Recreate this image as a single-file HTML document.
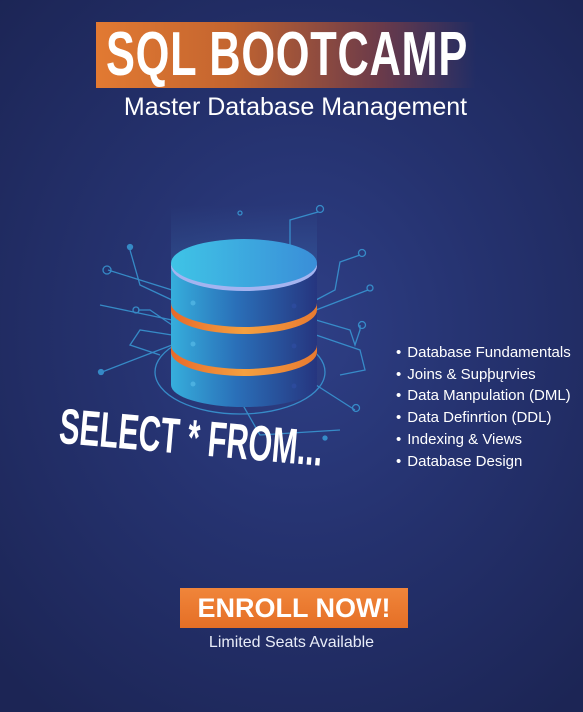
<!DOCTYPE html>
<html><head><meta charset="utf-8"><style>
html,body{margin:0;padding:0}
body{width:583px;height:712px;overflow:hidden;position:relative;font-family:"Liberation Sans",sans-serif;
background:radial-gradient(ellipse 420px 480px at 300px 330px,#2e3f86 0%,#25326f 45%,#1c2555 100%);}
.abs{position:absolute}
#banner{left:96px;top:22px;width:380px;height:66px;background:linear-gradient(90deg,#e27a32 0%,#c4652f 35%,#6a3a4a 75%,rgba(40,40,90,0) 100%)}
#title{left:106px;top:17px;color:#fff;font-weight:bold;font-size:62px;line-height:76px;transform:scaleX(0.70);transform-origin:left top;white-space:nowrap;letter-spacing:1px}
#sub{left:0;width:583px;top:91px;text-align:center;color:#fff;font-size:25px;line-height:32px;padding-left:4px}
#list{left:396px;top:342px;color:#fff;font-size:15px;line-height:21.7px}
#list div:before{content:"•";margin-right:6px}
#sel{left:62px;top:398px;color:#fff;font-weight:bold;font-size:50px;line-height:56px;transform:rotate(5deg) scaleX(0.61);transform-origin:left top;white-space:nowrap}
#btn{left:180px;top:588px;width:228px;height:40px;background:linear-gradient(#f0853a,#e56f26);color:#fff;font-weight:bold;font-size:27px;line-height:40px;text-align:center}
#lim{left:0;width:583px;top:633px;text-align:center;color:#e8ecf8;font-size:16px;line-height:20px}
</style></head><body>
<div id="banner" class="abs"></div>
<div id="title" class="abs">SQL BOOTCAMP</div>
<div id="sub" class="abs">Master Database Management</div>
<svg class="abs" style="left:0;top:0" width="583" height="712">
<defs>
<linearGradient id="cyl" x1="0" x2="1"><stop offset="0" stop-color="#36aedc"/><stop offset=".45" stop-color="#2a6fb8"/><stop offset="1" stop-color="#26357f"/></linearGradient>
<linearGradient id="top" x1="0" x2="1"><stop offset="0" stop-color="#3fc4e6"/><stop offset="1" stop-color="#3a8ed8"/></linearGradient>
<linearGradient id="band" x1="0" x2="1"><stop offset="0" stop-color="#e86a2a"/><stop offset=".5" stop-color="#f4a040"/><stop offset="1" stop-color="#e87a30"/></linearGradient>
<linearGradient id="glow" x1="0" y1="0" x2="0" y2="1"><stop offset="0" stop-color="#4aa0e0" stop-opacity="0"/><stop offset="1" stop-color="#4aa0e0" stop-opacity=".35"/></linearGradient>
</defs>
<g stroke="#3aa0dc" stroke-width="1.3" fill="none" opacity=".8">
<path d="M172 290 L108 270"/><circle cx="107" cy="270" r="4"/>
<path d="M172 300 L140 285 L130 250"/><circle cx="130" cy="247" r="2.5" fill="#3aa0dc"/>
<path d="M172 320 L100 305"/><path d="M172 325 L150 310 L138 310"/><circle cx="136" cy="310" r="3"/>
<path d="M172 345 L102 372"/><circle cx="101" cy="372" r="2.5" fill="#3aa0dc"/>
<path d="M172 335 L140 330 L130 345 L160 355"/>
<path d="M290 245 L290 220 L318 212"/><circle cx="320" cy="209" r="3.5"/>
<path d="M316 300 L335 290 L340 262 L360 255"/><circle cx="362" cy="253" r="3.5"/>
<path d="M316 310 L368 290"/><circle cx="370" cy="288" r="3"/>
<path d="M316 320 L350 330 L355 345 L360 330 L360 325"/><circle cx="362" cy="325" r="3.5"/>
<path d="M316 335 L360 350 L365 370 L340 375"/>
<path d="M316 385 L355 410"/><circle cx="356" cy="408" r="3.5"/>
<ellipse cx="240" cy="372" rx="85" ry="42"/>
<path d="M240 400 L260 435 L340 430"/>
<circle cx="240" cy="213" r="2"/>
<circle cx="325" cy="438" r="2" fill="#3aa0dc"/>
</g>
<rect x="171" y="205" width="146" height="60" fill="url(#glow)" opacity=".5"/>
<path d="M171 263 L171 385 A73 22 0 0 0 317 385 L317 263 Z" fill="url(#cyl)"/>
<path d="M171 303 A73 24 0 0 0 317 303 L317 310 A73 24 0 0 1 171 310 Z" fill="url(#band)"/>
<path d="M171 345 A73 24 0 0 0 317 345 L317 352 A73 24 0 0 1 171 352 Z" fill="url(#band)"/>
<ellipse cx="244" cy="266" rx="73" ry="25" fill="#a4b4f0"/>
<ellipse cx="244" cy="263" rx="73" ry="24" fill="url(#top)"/>
<g fill="#4bb0e0"><circle cx="193" cy="303" r="2.5"/><circle cx="193" cy="344" r="2.5"/><circle cx="193" cy="384" r="2.5"/></g>
<g fill="#2c4a9c"><circle cx="294" cy="306" r="2.5"/><circle cx="294" cy="346" r="2.5"/><circle cx="294" cy="386" r="2.5"/></g>
</svg>
<div id="sel" class="abs">SELECT * FROM...</div>
<div id="list" class="abs">
<div>Database Fundamentals</div><div>Joins &amp; Supþųrvies</div><div>Data Manpulation (DML)</div><div>Data Definrtion (DDL)</div><div>Indexing &amp; Views</div><div>Database Design</div>
</div>
<div id="btn" class="abs">ENROLL NOW!</div>
<div id="lim" class="abs">Limited Seats Available</div>
</body></html>
